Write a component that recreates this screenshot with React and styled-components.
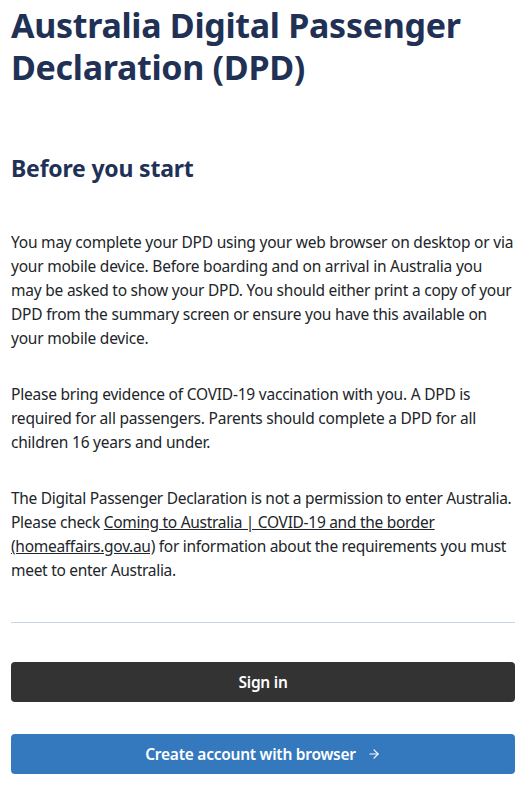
import React from 'react'
import styled, { createGlobalStyle } from 'styled-components'
import { ArrowRight } from 'lucide-react'

const GlobalStyle = createGlobalStyle`
    body{
        margin:0;
        background:#fff;
        font-family:"Segoe UI", "Noto Sans", sans-serif;
        color:#212529;
    }
`;

const Page = styled.main`
    padding:4px 10px 24px 11px;
`;

const Title = styled.h1`
    margin:0;
    font-size:34px;
    letter-spacing:-0.3px;
    line-height:42px;
    font-weight:700;
    color:#213156;
`;

const SubTitle = styled.h2`
    margin:65px 0 47px;
    font-size:23px;
    letter-spacing:-0.2px;
    line-height:30px;
    font-weight:700;
    color:#213156;
`;

const Text = styled.p`
    margin:0 0 32px;
    font-size:15.5px;
    letter-spacing:${props => props.$tight ? '-0.29px' : '-0.22px'};
    line-height:24px;

    &:last-of-type{
        margin-bottom:40px;
    }

    a{
        color:inherit;
        text-decoration:underline;
    }
`;

const Divider = styled.hr`
    margin:0 0 39px;
    border:none;
    border-top:1px solid #c8d5e3;
`;

const Actions = styled.div`
    display:flex;
    flex-direction:column;
    gap:32px;
`;

const Button = styled.button`
    display:flex;
    align-items:center;
    justify-content:center;
    gap:11px;
    height:40px;
    width:100%;
    border:none;
    border-radius:4px;
    background:${props => props.$primary ? '#3479be' : '#333333'};
    color:#fff;
    font-family:inherit;
    font-size:15.5px;
    letter-spacing:-0.25px;
    font-weight:600;
    cursor:pointer;
`;

export default function App() {
    return (
        <>
            <GlobalStyle />
            <Page>
                <Title>Australia Digital Passenger Declaration (DPD)</Title>
                <SubTitle>Before you start</SubTitle>
                <Text>
                    You may complete your DPD using your web browser on desktop or via your mobile device.
                    Before boarding and on arrival in Australia you may be asked to show your DPD. You should
                    either print a copy of your DPD from the summary screen or ensure you have this available
                    on your mobile device.
                </Text>
                <Text>
                    Please bring evidence of COVID-19 vaccination with you. A DPD is required for all passengers.
                    Parents should complete a DPD for all children 16 years and under.
                </Text>
                <Text $tight>
                    The Digital Passenger Declaration is not a permission to enter Australia. Please
                    check <a href="#">Coming to Australia | COVID-19 and the border (homeaffairs.gov.au)</a> for
                    information about the requirements you must meet to enter Australia.
                </Text>
                <Divider />
                <Actions>
                    <Button>Sign in</Button>
                    <Button $primary>
                        Create account with browser
                        <ArrowRight size={14} strokeWidth={2} />
                    </Button>
                </Actions>
            </Page>
        </>
    )
}
